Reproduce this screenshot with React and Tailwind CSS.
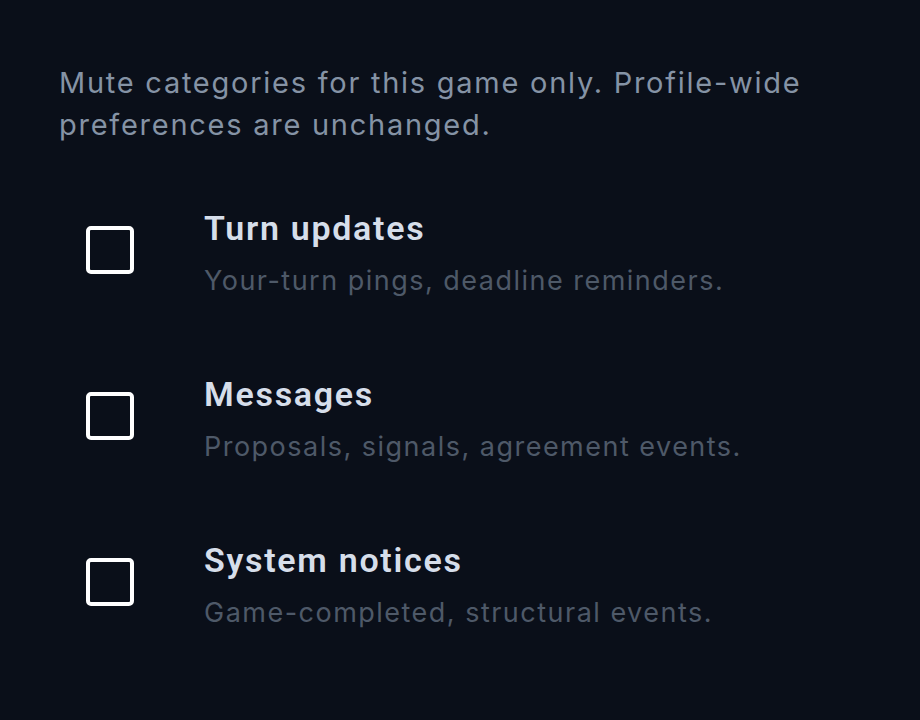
import React, { useState } from "react";

const categories = [
  { key: "turn", title: "Turn updates", desc: "Your-turn pings, deadline reminders." },
  { key: "messages", title: "Messages", desc: "Proposals, signals, agreement events." },
  { key: "system", title: "System notices", desc: "Game-completed, structural events." },
];

function Row({ item, checked, onToggle }) {
  return (
    <label className="flex items-start gap-[70px] cursor-pointer">
      <input
        type="checkbox"
        checked={checked}
        onChange={onToggle}
        className="appearance-none shrink-0 mt-[18px] w-[48px] h-[48px] rounded-[5px] border-[4px] border-white bg-transparent checked:bg-white"
      />
      <div className="flex flex-col">
        <span className="font-['Roboto',sans-serif] font-semibold text-[34px] leading-[40px] tracking-[0.05em] text-[#d6deea]">
          {item.title}
        </span>
        <span className="mt-[16px] font-['Inter',sans-serif] text-[27px] leading-[34px] tracking-[0.055em] text-[#4e5968]">
          {item.desc}
        </span>
      </div>
    </label>
  );
}

export default function App() {
  const [muted, setMuted] = useState({});

  return (
    <div className="w-[920px] h-[720px] bg-[#0a0f19] overflow-hidden">
      <div className="pl-[59px] pr-[40px] pt-[62px]">
        <p className="font-['Inter',sans-serif] text-[29px] leading-[42px] tracking-[0.06em] text-[#8593a5]">
          Mute categories for this game only. Profile-wide preferences are unchanged.
        </p>
      </div>
      <div className="pl-[86px] mt-[62px] flex flex-col gap-[76px]">
        {categories.map((c) => (
          <Row
            key={c.key}
            item={c}
            checked={!!muted[c.key]}
            onToggle={() => setMuted((m) => ({ ...m, [c.key]: !m[c.key] }))}
          />
        ))}
      </div>
    </div>
  );
}
